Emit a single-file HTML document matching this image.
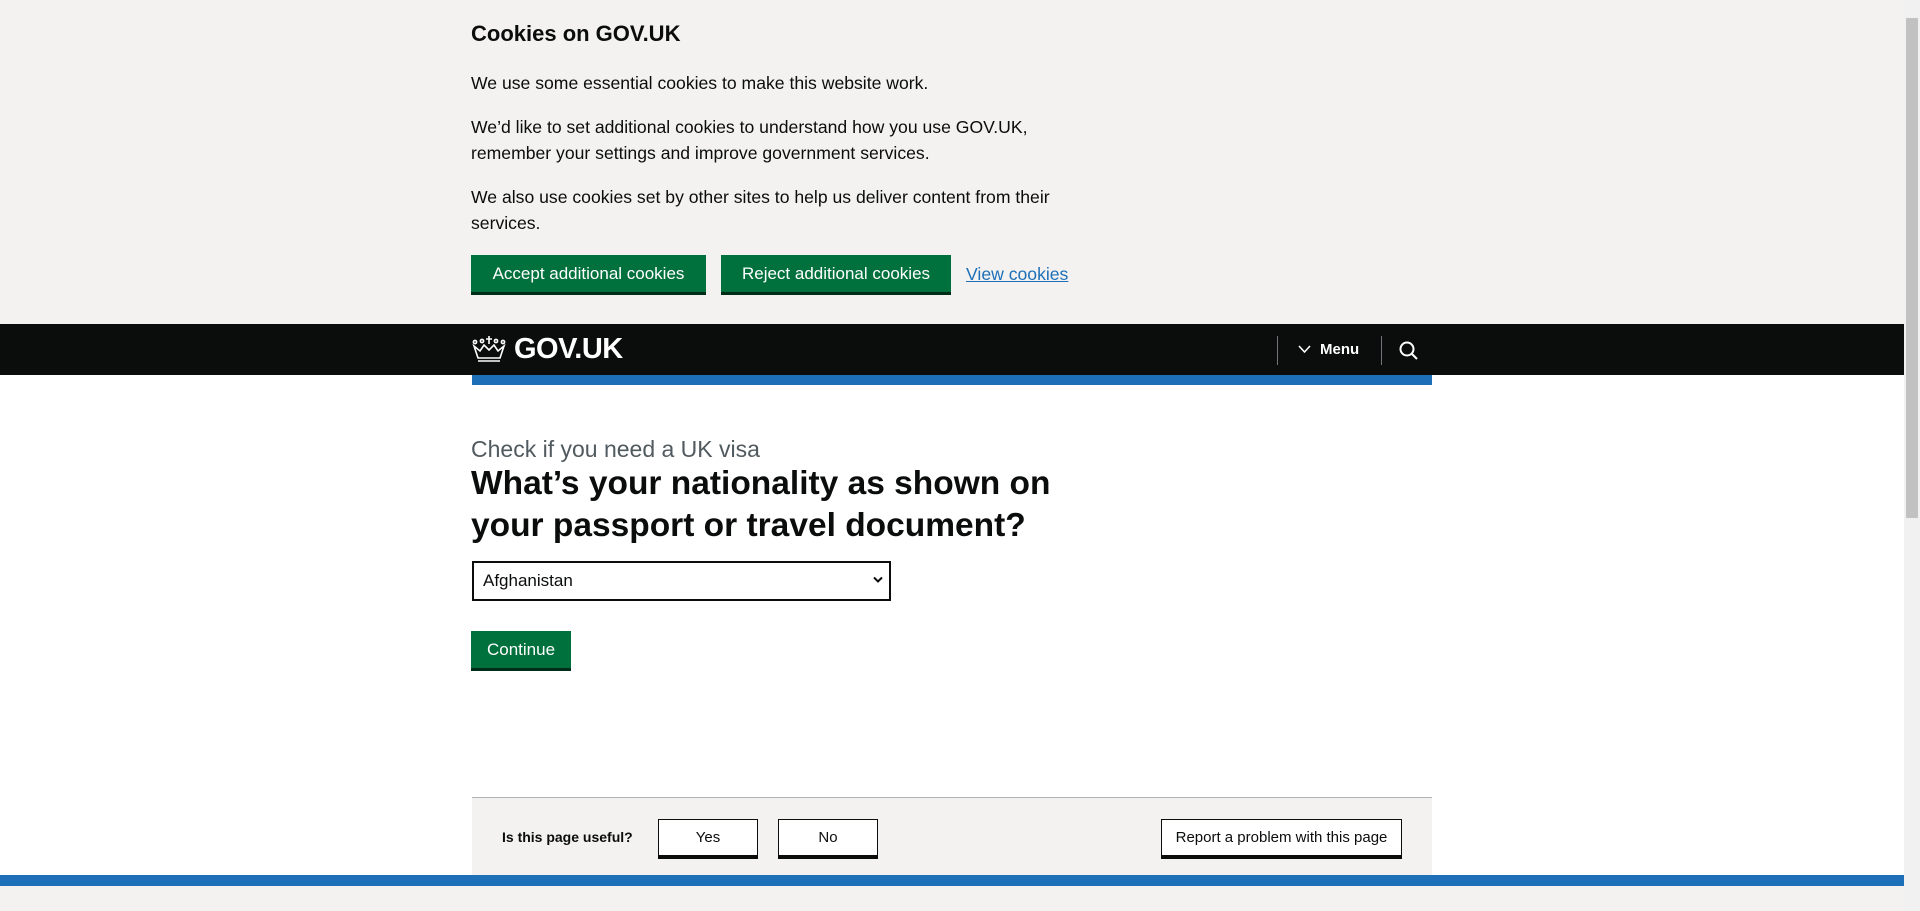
<!DOCTYPE html>
<html><head><meta charset="utf-8"><style>
*{margin:0;padding:0;box-sizing:border-box}
body{width:1920px;height:911px;overflow:hidden;background:#fff;font-family:"Liberation Sans",Arial,sans-serif;color:#0b0c0c;position:relative}
.a{position:absolute;white-space:nowrap}
.btn{position:absolute;background:#00703c;color:#fff;box-shadow:0 3px 0 #002d18;font-size:17px;display:flex;align-items:center;justify-content:center}
.wb{position:absolute;background:#fff;border:1px solid #0b0c0c;box-shadow:0 3px 0 #0b0c0c;font-size:15px;display:flex;align-items:center;justify-content:center}
p.a{font-size:17.6px;line-height:26px}
</style></head><body>
<div class="a" style="left:0;top:0;width:1904px;height:324px;background:#f3f2f1"></div>
<div class="a" style="left:471px;top:21px;font-size:22px;font-weight:bold">Cookies on GOV.UK</div>
<p class="a" style="left:471px;top:70px">We use some essential cookies to make this website work.</p>
<p class="a" style="left:471px;top:114px">We’d like to set additional cookies to understand how you use GOV.UK,<br>remember your settings and improve government services.</p>
<p class="a" style="left:471px;top:184px">We also use cookies set by other sites to help us deliver content from their<br>services.</p>
<div class="btn" style="left:471px;top:255px;width:235px;height:37px">Accept additional cookies</div>
<div class="btn" style="left:721px;top:255px;width:230px;height:37px">Reject additional cookies</div>
<div class="a" style="left:966px;top:264px;font-size:17.6px;color:#1d70b8;text-decoration:underline">View cookies</div>

<div class="a" style="left:0;top:324px;width:1904px;height:51px;background:#0b0c0c"></div>
<svg class="a" style="left:471px;top:335px" width="36" height="28" viewBox="0 0 36 28" fill="none" stroke="#fff" stroke-width="1.6">
<path d="M3 11 L7 23 H29 L33 11 L27 16 L23 10 L18 15 L13 10 L9 16 Z"/><path d="M7 26 H29"/><path d="M18 1 V9 M15 4 H21"/><circle cx="4" cy="7" r="1.6"/><circle cx="32" cy="7" r="1.6"/><circle cx="11" cy="6" r="1.6"/><circle cx="25" cy="6" r="1.6"/>
</svg>
<div class="a" style="left:514px;top:333px;font-size:29px;font-weight:bold;color:#fff;letter-spacing:-0.5px">GOV.UK</div>
<div class="a" style="left:1277px;top:336px;width:1px;height:29px;background:#6f777b"></div>
<svg class="a" style="left:1298px;top:345px" width="13" height="9" viewBox="0 0 13 9"><path d="M1 1 L6.5 7 L12 1" stroke="#fff" stroke-width="1.6" fill="none"/></svg>
<div class="a" style="left:1320px;top:341px;font-size:15px;font-weight:bold;color:#fff">Menu</div>
<div class="a" style="left:1381px;top:336px;width:1px;height:29px;background:#6f777b"></div>
<svg class="a" style="left:1398px;top:340px" width="22" height="22" viewBox="0 0 22 22"><circle cx="9" cy="9" r="6.5" stroke="#fff" stroke-width="2" fill="none"/><path d="M13.5 13.5 L19 19" stroke="#fff" stroke-width="2"/></svg>
<div class="a" style="left:472px;top:375px;width:960px;height:10px;background:#1d70b8"></div>

<div class="a" style="left:471px;top:436px;font-size:23px;color:#505a5f">Check if you need a UK visa</div>
<div class="a" style="left:471px;top:463px;font-size:33.5px;font-weight:bold;line-height:42px">What’s your nationality as shown on<br>your passport or travel document?</div>
<div class="a" style="left:472px;top:561px;width:419px;height:40px;border:2px solid #0b0c0c;font-size:17px;padding:8px 9px">Afghanistan</div>
<svg class="a" style="left:873px;top:576px" width="10" height="8" viewBox="0 0 10 8"><path d="M1 1.5 L5 5.5 L9 1.5" stroke="#0b0c0c" stroke-width="2" fill="none"/></svg>
<div class="btn" style="left:471px;top:631px;width:100px;height:37px">Continue</div>

<div class="a" style="left:472px;top:797px;width:960px;height:79px;background:#f3f2f1;border-top:1px solid #b1b4b6"></div>
<div class="a" style="left:502px;top:829px;font-size:14px;font-weight:bold">Is this page useful?</div>
<div class="wb" style="left:658px;top:819px;width:100px;height:37px">Yes</div>
<div class="wb" style="left:778px;top:819px;width:100px;height:37px">No</div>
<div class="wb" style="left:1161px;top:819px;width:241px;height:37px">Report a problem with this page</div>
<div class="a" style="left:0;top:875px;width:1904px;height:11px;background:#1d70b8"></div>
<div class="a" style="left:0;top:886px;width:1904px;height:25px;background:#f3f2f1"></div>
<div class="a" style="left:1904px;top:0;width:16px;height:911px;background:#f1f1f1"></div>
<div class="a" style="left:1906px;top:18px;width:12px;height:500px;background:#c1c1c1"></div>
</body></html>
